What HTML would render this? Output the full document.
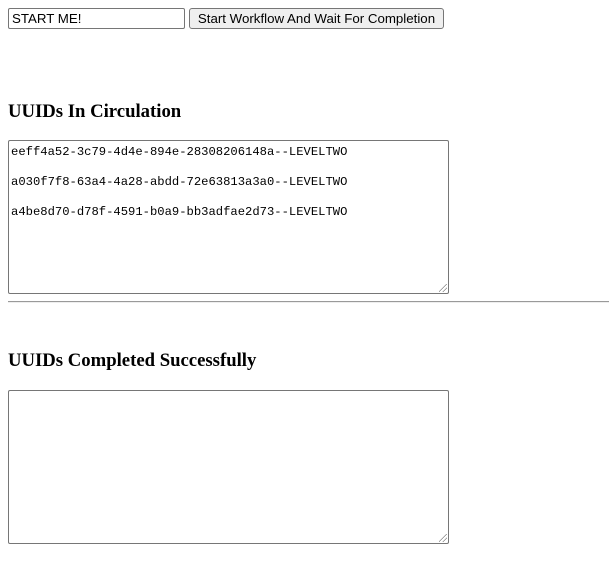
<!DOCTYPE html>
<html><head><style>
body{margin:0;background:#fff;width:609px;height:580px;position:relative;overflow:hidden;font-family:"Liberation Sans",sans-serif}
.a{position:absolute;box-sizing:border-box}
.inp{left:8px;top:8px;width:177px;height:21px;border:1px solid #767676;border-radius:2px;font-size:13.3px;padding:2px 3px;line-height:15px;color:#000}
.btn{left:189px;top:8px;width:255px;height:21px;border:1px solid #767676;border-radius:3px;background:#efefef;font-size:13.3px;text-align:center;line-height:19px;color:#000}
h3{position:absolute;margin:0;left:8px;font-family:"Liberation Serif",serif;font-size:18.72px;font-weight:bold;line-height:22px}
.ta{left:8px;width:441px;height:154px;border:1px solid #767676;border-radius:2px;font-family:"Liberation Mono",monospace;font-size:12.2px;padding:4px 2px;line-height:15px;color:#000;white-space:pre}
.hr{left:8px;top:301px;width:601px;height:2px;border-top:1px solid #9a9a9a;border-bottom:1px solid #eee}
.grip{position:absolute;right:1px;bottom:1px;width:8px;height:8px;background:linear-gradient(135deg,transparent 45%,#888 45%,#888 52%,transparent 52%,transparent 70%,#888 70%,#888 77%,transparent 77%)}
</style></head><body>
<div class="a inp">START ME!</div>
<div class="a btn">Start Workflow And Wait For Completion</div>
<h3 style="top:101px">UUIDs In Circulation</h3>
<div class="a ta" style="top:140px">eeff4a52-3c79-4d4e-894e-28308206148a--LEVELTWO

a030f7f8-63a4-4a28-abdd-72e63813a3a0--LEVELTWO

a4be8d70-d78f-4591-b0a9-bb3adfae2d73--LEVELTWO<div class="grip"></div></div>
<div class="a hr"></div>
<h3 style="top:350px">UUIDs Completed Successfully</h3>
<div class="a ta" style="top:390px"><div class="grip"></div></div>
</body></html>
